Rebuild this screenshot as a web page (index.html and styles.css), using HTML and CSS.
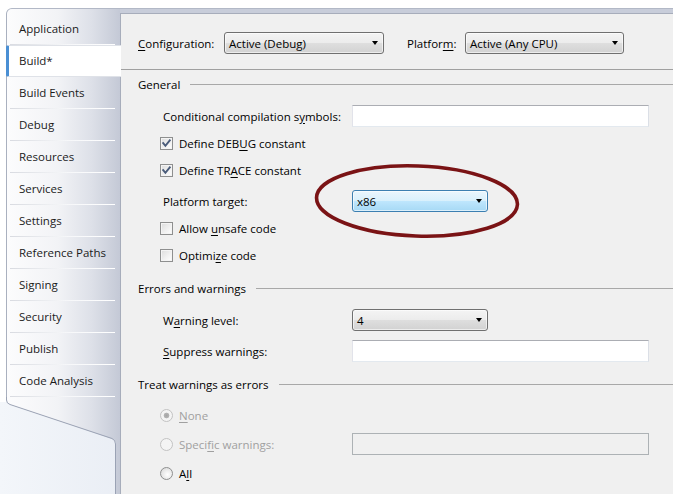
FILE: index.html
```html
<!DOCTYPE html>
<html>
<head>
<meta charset="utf-8">
<title>Build</title>
<link rel="stylesheet" href="styles.css">
</head>
<body>
<div class="page">
  <div class="frame">
    <nav class="sidebar">
      <div class="tab">Application</div>
      <div class="tab active">Build*</div>
      <div class="tab">Build Events</div>
      <div class="tab">Debug</div>
      <div class="tab">Resources</div>
      <div class="tab">Services</div>
      <div class="tab">Settings</div>
      <div class="tab">Reference Paths</div>
      <div class="tab">Signing</div>
      <div class="tab">Security</div>
      <div class="tab">Publish</div>
      <div class="tab">Code Analysis</div>
      <div class="tail">
        <svg width="120" height="97" viewBox="0 0 120 97">
          <defs>
            <linearGradient id="sbg" gradientUnits="userSpaceOnUse" x1="7" y1="0" x2="120" y2="0">
              <stop offset="0" stop-color="#fcfcfd"/>
              <stop offset="0.45" stop-color="#f2f3f6"/>
              <stop offset="0.75" stop-color="#dde0e8"/>
              <stop offset="1" stop-color="#c4c9d6"/>
            </linearGradient>
            <linearGradient id="lbg" x1="0" y1="0" x2="1" y2="0">
              <stop offset="0" stop-color="#f3f6fa"/>
              <stop offset="1" stop-color="#eaeef5"/>
            </linearGradient>
          </defs>
          <rect x="0" y="0" width="120" height="97" fill="url(#lbg)"/>
          <rect x="0" y="0" width="6" height="5" fill="#ffffff"/>
          <path d="M6 0 L6 3 Q6 7 10 8 L112 42 Q116 43.5 116 47 L116 97 L120 97 L120 0 Z" fill="url(#sbg)"/>
          <path d="M6.5 0 L6.5 3 Q6.5 6.5 10 7.5 L112 41.5 Q115.5 43 115.5 47 L115.5 97" fill="none" stroke="#9aa2b4" stroke-width="1"/>
        </svg>
      </div>
    </nav>

    <main class="content">
      <div class="config-bar">
        <span class="config-label"><u>C</u>onfiguration:</span>
        <div class="combo combo-config"><span class="combo-text">Active (Debug)</span><i class="arrow"></i></div>
        <span class="platform-label">Platfor<u>m</u>:</span>
        <div class="combo combo-platform"><span class="combo-text">Active (Any CPU)</span><i class="arrow"></i></div>
      </div>
      <div class="rule"></div>

      <section class="group group-first">
        <div class="group-title">General</div>
        <div class="fields">
          <div class="row">
            <span class="label">Conditional compilation s<u>y</u>mbols:</span>
            <div class="textbox"></div>
          </div>
          <div class="row">
            <span class="checkbox checked"><svg width="11" height="11" viewBox="0 0 11 11"><path d="M2.2 5.2 L4.4 7.8 L8.8 2.4" fill="none" stroke="#4a5c7a" stroke-width="1.9" stroke-linecap="square"/></svg></span>
            <span>Define DEB<u>U</u>G constant</span>
          </div>
          <div class="row">
            <span class="checkbox checked"><svg width="11" height="11" viewBox="0 0 11 11"><path d="M2.2 5.2 L4.4 7.8 L8.8 2.4" fill="none" stroke="#4a5c7a" stroke-width="1.9" stroke-linecap="square"/></svg></span>
            <span>Define TR<u>A</u>CE constant</span>
          </div>
          <div class="row spaced highlight">
            <span class="label">Platform tar<u>g</u>et:</span>
            <div class="combo combo-small combo-hot"><span class="combo-text">x86</span><i class="arrow"></i></div>
            <svg class="ring" width="214" height="78" viewBox="0 0 214 78">
              <ellipse cx="106" cy="38" rx="100.5" ry="35" transform="rotate(2 106 38)" fill="none" stroke="#7a1315" stroke-width="3.6"/>
            </svg>
          </div>
          <div class="row">
            <span class="checkbox"></span>
            <span>Allow <u>u</u>nsafe code</span>
          </div>
          <div class="row">
            <span class="checkbox"></span>
            <span>Optimi<u>z</u>e code</span>
          </div>
        </div>
      </section>

      <section class="group">
        <div class="group-title">Errors and warnings</div>
        <div class="fields">
          <div class="row">
            <span class="label">W<u>a</u>rning level:</span>
            <div class="combo combo-small"><span class="combo-text">4</span><i class="arrow"></i></div>
          </div>
          <div class="row spaced">
            <span class="label"><u>S</u>uppress warnings:</span>
            <div class="textbox"></div>
          </div>
        </div>
      </section>

      <section class="group">
        <div class="group-title">Treat warnings as errors</div>
        <div class="fields loose">
          <div class="row disabled">
            <span class="radio selected"></span>
            <span><u>N</u>one</span>
          </div>
          <div class="row disabled">
            <span class="radio"></span>
            <span class="label-radio">Speci<u>f</u>ic warnings:</span>
            <div class="textbox textbox-disabled"></div>
          </div>
          <div class="row">
            <span class="radio"></span>
            <span>A<u>l</u>l</span>
          </div>
        </div>
      </section>
    </main>
  </div>
</div>
</body>
</html>
```

FILE: styles.css
```css
* { box-sizing: border-box; }

html, body {
  margin: 0;
  padding: 0;
}

body {
  width: 673px;
  height: 494px;
  overflow: hidden;
  background: #ffffff;
  font-family: "Open Sans", "Noto Sans", sans-serif;
  font-size: 11.5px;
  color: #000000;
}

u { text-decoration: underline; text-underline-offset: 2px; text-decoration-thickness: 1px; }

.page {
  height: 494px;
  padding-top: 8px;
}

.frame {
  display: flex;
  height: 486px;
  margin-left: 6px;
  background: #c8cdda;
  border-top: 1px solid #b2b8c6;
  border-left: 1px solid #a9b0bf;
  border-top-left-radius: 6px;
}

/* ---------- sidebar ---------- */
.sidebar {
  flex: none;
  width: 113px;
  display: flex;
  flex-direction: column;
  padding-top: 4px;
  border-top-left-radius: 5px;
  background: linear-gradient(to right, #fcfcfd 0%, #f2f3f6 45%, #dde0e8 75%, #c4c9d6 100%);
}

.tab {
  height: 32px;
  line-height: 31px;
  padding-left: 12px;
  color: #1b1b1b;
  white-space: nowrap;
  border-bottom: 1px solid;
  border-image: linear-gradient(to right, transparent 4px, #d9dbe1 4px, #f6f7f9 60px, #ffffff 107px, transparent 107px) 1;
}

.tab.active {
  position: relative;
  z-index: 1;
  margin-left: -1px;
  margin-right: -1px;
  padding-left: 10px;
  background: #ffffff;
  border-left: 3px solid #4a8fd4;
  border-top: 1px solid #dfe2e8;
  border-bottom: 1px solid #dfe2e8;
  border-image: none;
  border-radius: 2px 0 0 2px;
  line-height: 29px;
}

.tail {
  flex: 1;
  margin-left: -7px;
  line-height: 0;
}

/* ---------- content ---------- */
.content {
  flex: 1;
  margin-top: 4px;
  background: #f0f0f0;
  border-top: 1px solid #a7adbb;
  border-left: 1px solid #a7adbb;
  padding: 18px 0 0 17px;
}

.config-bar {
  display: flex;
  align-items: center;
  height: 22px;
}

.config-label { width: 86px; }
.platform-label { width: 58px; margin-left: 23px; }

.combo {
  position: relative;
  display: flex;
  align-items: center;
  height: 22px;
  padding: 0 5px 0 4px;
  border: 1px solid #707070;
  border-radius: 3px;
  background: linear-gradient(to bottom, #f4f4f4 0%, #ececec 48%, #dedede 52%, #d2d2d2 100%);
  box-shadow: inset 0 0 0 1px rgba(255, 255, 255, 0.6);
}

.combo-text { flex: 1; white-space: nowrap; }

.arrow {
  width: 0;
  height: 0;
  border-top: 4px solid #000000;
  border-left: 3.5px solid transparent;
  border-right: 3.5px solid transparent;
}

.combo-config { width: 160px; }
.combo-platform { width: 159px; }
.combo-small { width: 136px; }

.combo-hot {
  border-color: #3c7fb1;
  background: linear-gradient(to bottom, #eaf6fd 0%, #d9f0fc 48%, #bee6fd 52%, #a7d9f5 100%);
}

.rule {
  height: 1px;
  margin: 15px 0 0 -17px;
  background: #a0a0a0;
}

.group { margin-top: 11px; }
.group-first { margin-top: 3px; }

.group-title {
  display: flex;
  align-items: center;
  gap: 10px;
  height: 22px;
  white-space: nowrap;
}

.group-title::after {
  content: "";
  flex: 1;
  height: 1px;
  background: #a8a8a8;
}

.fields {
  display: flex;
  flex-direction: column;
  gap: 5px;
  margin-top: 10px;
  padding: 0 24px 0 25px;
}

.fields.loose {
  gap: 7px;
  margin-top: 9px;
}

.row {
  display: flex;
  align-items: center;
  height: 22px;
  white-space: nowrap;
}

.row.spaced { margin-top: 4px; }

.highlight { position: relative; }

.ring {
  position: absolute;
  left: 148px;
  top: -27px;
  pointer-events: none;
}

.label { width: 189px; flex: none; }
.label-radio { width: 173px; flex: none; }

.textbox {
  flex: 1;
  height: 22px;
  background: #ffffff;
  border: 1px solid;
  border-color: #abadb3 #dbdfe6 #e3e9ef #e2e3ea;
}

.textbox-disabled {
  background: #f0f0f0;
  border-color: #adb2b5;
}

.checkbox {
  flex: none;
  display: flex;
  align-items: center;
  justify-content: center;
  width: 13px;
  height: 13px;
  margin: 0 6px 0 -3px;
  border: 1px solid #8e8f8f;
  background: linear-gradient(135deg, #dcdcdc 0%, #f2f2f2 60%, #ffffff 100%);
  box-shadow: inset 0 0 0 1px #f4f4f4;
}

.radio {
  flex: none;
  width: 13px;
  height: 13px;
  margin: 0 6px 0 -3px;
  border-radius: 50%;
  border: 1px solid #8e8f8f;
  background: radial-gradient(circle at 60% 60%, #ffffff 0%, #e6e6e6 60%, #d4d4d4 100%);
}

.disabled { color: #a0a0a0; }

.disabled .radio {
  border-color: #c3c3c3;
  background: #f4f4f4;
}

.disabled .radio.selected {
  background: radial-gradient(circle, #a5a5a5 0, #b4b4b4 2.5px, #f4f4f4 3.2px);
}
```
